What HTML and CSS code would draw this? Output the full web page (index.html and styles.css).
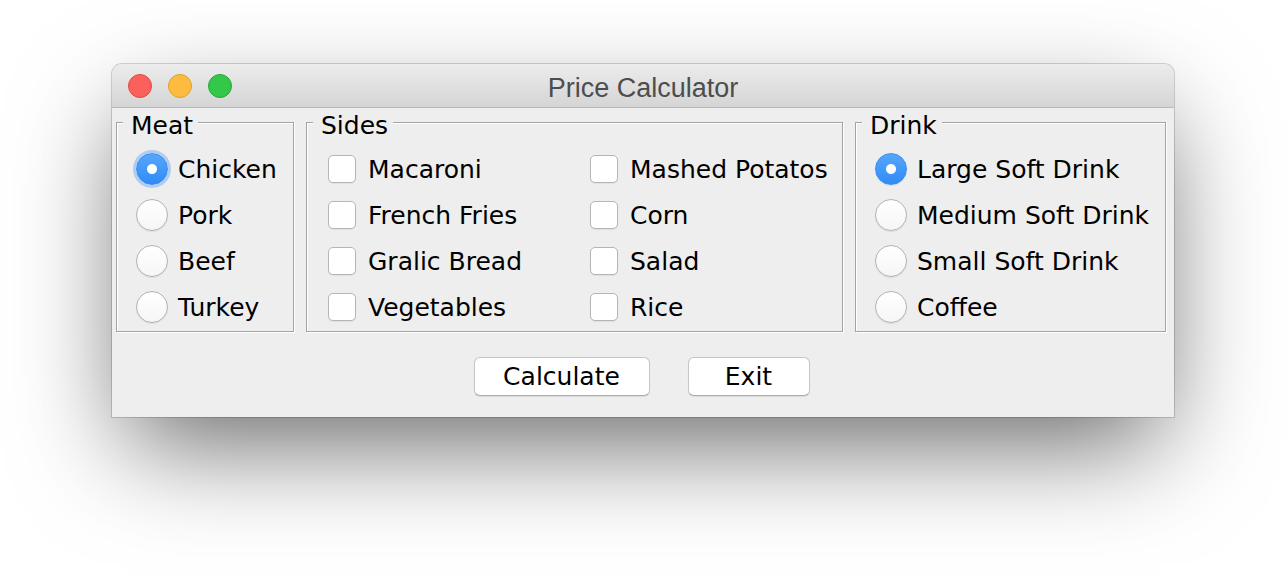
FILE: index.html
```html
<!DOCTYPE html>
<html lang="en">
<head>
<meta charset="utf-8">
<title>Price Calculator</title>
<link rel="stylesheet" href="styles.css">
</head>
<body>
<div class="stage">
  <div class="window">
    <div class="titlebar">
      <div class="lights">
        <span class="light red"></span>
        <span class="light yellow"></span>
        <span class="light green"></span>
      </div>
      <div class="title">Price Calculator</div>
      <div class="spacer"></div>
    </div>
    <div class="content">
      <div class="groups">
        <section class="group meat">
          <div class="group-title">Meat</div>
          <div class="list">
            <div class="opt"><span class="radio checked focus"></span><span class="label">Chicken</span></div>
            <div class="opt"><span class="radio"></span><span class="label">Pork</span></div>
            <div class="opt"><span class="radio"></span><span class="label">Beef</span></div>
            <div class="opt"><span class="radio"></span><span class="label">Turkey</span></div>
          </div>
        </section>
        <section class="group sides">
          <div class="group-title">Sides</div>
          <div class="list">
            <div class="opt"><span class="check"></span><span class="label">Macaroni</span></div>
            <div class="opt"><span class="check"></span><span class="label">Mashed Potatos</span></div>
            <div class="opt"><span class="check"></span><span class="label">French Fries</span></div>
            <div class="opt"><span class="check"></span><span class="label">Corn</span></div>
            <div class="opt"><span class="check"></span><span class="label">Gralic Bread</span></div>
            <div class="opt"><span class="check"></span><span class="label">Salad</span></div>
            <div class="opt"><span class="check"></span><span class="label">Vegetables</span></div>
            <div class="opt"><span class="check"></span><span class="label">Rice</span></div>
          </div>
        </section>
        <section class="group drink">
          <div class="group-title">Drink</div>
          <div class="list">
            <div class="opt"><span class="radio checked"></span><span class="label">Large Soft Drink</span></div>
            <div class="opt"><span class="radio"></span><span class="label">Medium Soft Drink</span></div>
            <div class="opt"><span class="radio"></span><span class="label">Small Soft Drink</span></div>
            <div class="opt"><span class="radio"></span><span class="label">Coffee</span></div>
          </div>
        </section>
      </div>
      <div class="buttons">
        <button class="btn calc">Calculate</button>
        <button class="btn exit">Exit</button>
      </div>
    </div>
  </div>
</div>
</body>
</html>
```
FILE: styles.css
```css
html, body {
  margin: 0;
  background: #fff;
}
body {
  font-family: "DejaVu Sans", sans-serif;
  color: #000;
}
.stage {
  box-sizing: border-box;
  height: 578px;
  padding: 64px 0 0 112px;
}
.window {
  width: 1062px;
  background: #eeeeee;
  border-radius: 10px 10px 0 0;
  overflow: hidden;
  box-shadow: 0 0 0 1px rgba(0, 0, 0, 0.16), 0 40px 100px -14px rgba(0, 0, 0, 0.6);
}
.titlebar {
  height: 43px;
  border-bottom: 1px solid #b9b9b9;
  background: linear-gradient(#ececec, #d5d5d5);
  display: grid;
  grid-template-columns: 1fr auto 1fr;
  align-items: center;
}
.lights {
  display: flex;
  gap: 16px;
  padding-left: 16px;
}
.light {
  width: 24px;
  height: 24px;
  border-radius: 50%;
  box-sizing: border-box;
}
.red { background: #fc605b; border: 1px solid #de4a44; }
.yellow { background: #fdbc40; border: 1px solid #dea123; }
.green { background: #34c84a; border: 1px solid #25a934; }
.title {
  padding-top: 5px;
  font-family: "Liberation Sans", Arial, sans-serif;
  font-size: 27px;
  color: #4d4d4d;
}
.content {
  padding: 14px 7px 21px 4px;
}
.groups {
  display: flex;
  gap: 12px;
}
.group {
  box-sizing: border-box;
  border: 1px solid #a3a3a3;
  box-shadow: inset 1px 1px 0 #fff, 1px 1px 0 #fff;
  padding-bottom: 1px;
}
.meat { width: 178px; }
.sides { width: 537px; }
.drink { width: 311px; }
.group-title {
  width: fit-content;
  margin: -10px 0 0 6px;
  padding: 0 5px 0 8px;
  background: #eeeeee;
  font-size: 25px;
  line-height: 26px;
}
.list {
  margin-top: 7px;
  padding-left: 19px;
}
.sides .list {
  display: grid;
  grid-template-columns: 262px auto;
}
.opt {
  height: 46px;
  display: flex;
  align-items: center;
  gap: 10px;
  font-size: 25px;
  white-space: nowrap;
}
.radio {
  flex: none;
  width: 32px;
  height: 32px;
  box-sizing: border-box;
  border-radius: 50%;
  border: 1px solid #b3b3b3;
  background: linear-gradient(#ffffff, #f6f6f6);
  box-shadow: 0 1px 1px rgba(0, 0, 0, 0.08);
}
.radio.checked {
  border-color: #3a8ff2;
  background: radial-gradient(circle, #fff 0 4.5px, rgba(255, 255, 255, 0) 5.5px), linear-gradient(#57a6fb, #2f8cf5);
}
.radio.focus {
  box-shadow: 0 0 0 3px rgba(100, 165, 245, 0.45);
}
.check {
  flex: none;
  width: 28px;
  height: 28px;
  margin: 0 2px;
  box-sizing: border-box;
  border: 1px solid #b5b5b5;
  border-radius: 5px;
  background: #fff;
  box-shadow: 0 1px 1px rgba(0, 0, 0, 0.06);
}
.buttons {
  display: flex;
  justify-content: center;
  gap: 38px;
  margin-top: 25px;
}
.btn {
  height: 39px;
  box-sizing: border-box;
  padding: 0;
  font-family: "DejaVu Sans", sans-serif;
  font-size: 25px;
  color: #000;
  background: #fff;
  border: 1px solid #c6c6c6;
  border-bottom-color: #aaaaaa;
  border-radius: 6px;
  box-shadow: 0 1px 1px rgba(0, 0, 0, 0.08);
}
.calc { width: 176px; }
.exit { width: 122px; }
```
